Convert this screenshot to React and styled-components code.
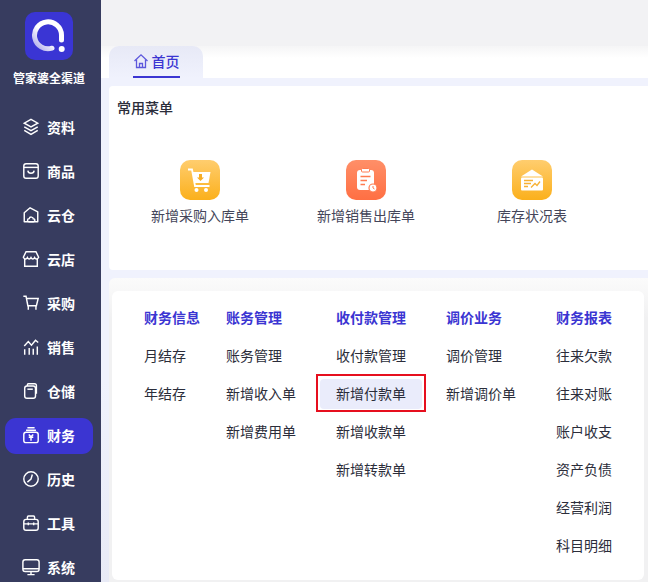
import React from 'react'
import styled, {createGlobalStyle} from 'styled-components'

const Global = createGlobalStyle`
    html, body {
        margin:0;
        padding:0;
        height:100%;
        overflow:hidden;
        background:#f0f2fd;
    }
    body {
        font-family:"Noto Sans CJK SC", "Liberation Sans", sans-serif;
    }
`

const Page = styled.div`
    display:flex;
    width:648px;
    height:582px;
    overflow:hidden;
`

const Sidebar = styled.aside`
    flex:none;
    box-sizing:border-box;
    width:101px;
    height:582px;
    padding-right:3px;
    background:#373c5f;
    display:flex;
    flex-direction:column;
    align-items:center;
    overflow:hidden;
`

const Logo = styled.div`
    flex:none;
    width:48px;
    height:48px;
    margin-top:12px;
    border-radius:10px;
    background:#3a35d4;
    display:flex;
    align-items:center;
    justify-content:center;
`

const Brand = styled.div`
    flex:none;
    margin-top:8px;
    height:20px;
    line-height:20px;
    font-size:12px;
    font-weight:700;
    color:#fff;
    white-space:nowrap;
`

const Nav = styled.nav`
    flex:none;
    margin-top:22px;
    width:100%;
    display:flex;
    flex-direction:column;
    gap:8px;
`

const NavItem = styled.div`
    box-sizing:border-box;
    width:88px;
    height:36px;
    margin-left:5px;
    padding:0 0 2px 17px;
    border-radius:11px;
    display:flex;
    align-items:center;
    gap:7px;
    background:${p => p.$active ? '#3b35d2' : 'transparent'};
    color:#fff;
    font-size:14px;
    font-weight:700;
    svg {
        flex:none;
    }
`

const Main = styled.main`
    flex:1;
    min-width:0;
    display:flex;
    flex-direction:column;
`

const Header = styled.div`
    flex:none;
    height:46px;
    background:#f2f2f4;
`

const TabBar = styled.div`
    flex:none;
    height:32px;
    padding-left:8px;
    background:linear-gradient(#f5f5f6, #fff 12px);
`

const Tab = styled.div`
    width:94px;
    height:32px;
    border-radius:10px 10px 0 0;
    background:linear-gradient(#e7e9f6, #f0f2fd);
    display:flex;
    justify-content:center;
`

const TabInner = styled.div`
    height:32px;
    box-sizing:border-box;
    border-bottom:2px solid #3b35d2;
    display:flex;
    align-items:center;
    gap:3px;
    color:#3b35d2;
    font-size:14px;
    font-weight:500;
`

const Content = styled.div`
    flex:1;
    min-height:0;
    display:flex;
    flex-direction:column;
    padding:8px 0 0 8px;
    background:linear-gradient(#f0f2fd 60%, #e8eaf6);
`

const QuickCard = styled.section`
    flex:none;
    height:184px;
    box-sizing:border-box;
    background:#fff;
    border-radius:4px 0 0 4px;
    padding:11px 8px 0;
`

const CardTitle = styled.div`
    height:20px;
    line-height:20px;
    font-size:14px;
    font-weight:500;
    color:#2b2d3a;
`

const Shortcuts = styled.div`
    display:flex;
    margin-top:43px;
    padding-left:17px;
    gap:34px;
`

const Shortcut = styled.div`
    width:132px;
    display:flex;
    flex-direction:column;
    align-items:center;
    gap:5px;
    font-size:14px;
    line-height:20px;
    color:#44465a;
`

const ShortcutIcon = styled.div`
    width:40px;
    height:40px;
    border-radius:10px;
    background:${p => p.$tone === 'orange'
        ? 'linear-gradient(#ff8f68, #ff6f43)'
        : 'linear-gradient(#ffcd6e, #fbb01c)'};
    display:flex;
    align-items:center;
    justify-content:center;
`

const MenuPanel = styled.div`
    flex:1;
    min-height:0;
    margin-top:8px;
    padding:13px 4px 2px 3px;
    border-radius:6px 0 0 0;
    background:linear-gradient(#fbfbfb, #f1f1f2 40px);
    display:flex;
`

const MenuCard = styled.section`
    flex:1;
    box-sizing:border-box;
    background:#fff;
    border-radius:6px;
    padding:7px 0 0 32px;
    display:flex;
    overflow:hidden;
`

const Column = styled.div`
    flex:none;
    width:${p => p.$width}px;
    display:flex;
    flex-direction:column;
`

const ColumnTitle = styled.div`
    height:38px;
    line-height:38px;
    font-size:14px;
    font-weight:700;
    color:#3b35d2;
    white-space:nowrap;
`

const MenuLink = styled.div`
    height:38px;
    line-height:38px;
    font-size:14px;
    color:#2b2d3a;
    white-space:nowrap;
`

const HighlightLink = styled(MenuLink)`
    position:relative;
    &::before {
        content:"";
        position:absolute;
        left:-20px;
        top:0;
        width:110px;
        height:38px;
        box-sizing:border-box;
        border:2px solid #e60f1e;
        background:#fff;
    }
    &::after {
        content:"";
        position:absolute;
        left:-16px;
        top:5px;
        width:102px;
        height:30px;
        border-radius:4px;
        background:#eaecfb;
    }
    span {
        position:relative;
        z-index:1;
    }
`

const navItems = [
    {label:'资料', icon:'layers'},
    {label:'商品', icon:'bag'},
    {label:'云仓', icon:'cloudHouse'},
    {label:'云店', icon:'store'},
    {label:'采购', icon:'cart'},
    {label:'销售', icon:'chart'},
    {label:'仓储', icon:'box'},
    {label:'财务', icon:'money', active:true},
    {label:'历史', icon:'clock'},
    {label:'工具', icon:'toolbox'},
    {label:'系统', icon:'monitor'},
]

const columns = [
    {title:'财务信息', width:82, links:['月结存', '年结存']},
    {title:'账务管理', width:110, links:['账务管理', '新增收入单', '新增费用单']},
    {title:'收付款管理', width:110, links:['收付款管理', '新增付款单', '新增收款单', '新增转款单'], hot:'新增付款单'},
    {title:'调价业务', width:110, links:['调价管理', '新增调价单']},
    {title:'财务报表', width:70, links:['往来欠款', '往来对账', '账户收支', '资产负债', '经营利润', '科目明细']},
]

const navPaths = {
    layers:<>
        <path d="M10 1.500 17.500 5.800 10 10 2.500 5.800Z"/>
        <path d="M2.500 9.800 10 14 17.500 9.800"/>
        <path d="M2.500 13.800 10 18.200 17.500 13.800"/>
    </>,
    bag:<>
        <rect x="2" y="2" width="16" height="16" rx="2.500"/>
        <path d="M2 6H18"/>
        <path d="M6.500 9.500C7 13.500 13 13.500 13.500 9.500"/>
    </>,
    cloudHouse:<>
        <path d="M2.500 17.500V7.500L9 2 17.500 6.500V17.500Z" strokeLinejoin="round"/>
        <path d="M8 17.500c-2.500 0-2.500-3.500 0-3.500 .5-2.500 4.500-2 4.500 .2 2.500 0 2.300 3.300 0 3.300Z"/>
    </>,
    store:<>
        <path d="M4.500 2H15.500L18.500 8C17.500 10.500 15 10.500 14 8.500 13 10.500 11 10.500 10 8.500 9 10.500 7 10.500 6 8.500 5 10.500 2.500 10.500 1.500 8Z"/>
        <path d="M3 10V18H17V10"/>
    </>,
    cart:<>
        <path d="M1.500 2.500H4.500L6.500 13H16L18 5H5"/>
        <path d="M7 13V17.500M15.500 13V17.500"/>
    </>,
    chart:<>
        <path d="M2.500 9 7 4 10.500 8 15 2.500 18 5"/>
        <path d="M3 12.500V18.500M8 11V18.500M12.500 12V18.500M17 9.500V18.500"/>
    </>,
    box:<>
        <path d="M6 4.500V3C6 2.500 6.500 2 7 2H14C15.500 2 16 2.500 16 4V13"/>
        <rect x="3" y="4.500" width="12" height="13.500" rx="2.500"/>
        <path d="M6 8H12"/>
    </>,
    money:<>
        <path d="M6 2H14M4.500 4.800H15.500"/>
        <rect x="2" y="7" width="16" height="11.500" rx="2.500"/>
        <path d="M7.500 9.500 10 12 12.500 9.500M7.500 12.500H12.500M10 12V16.500"/>
    </>,
    clock:<>
        <circle cx="10" cy="10" r="8"/>
        <path d="M11.500 5 10 10 6 13.500"/>
    </>,
    toolbox:<>
        <path d="M6 6V3.500C6 2.800 6.500 2.300 7.200 2.300H12.800C13.500 2.300 14 2.800 14 3.500V6"/>
        <rect x="2" y="6" width="16" height="12" rx="2.500"/>
        <path d="M2 11H18M7 9.500V12.500M13 9.500V12.500"/>
    </>,
    monitor:<>
        <rect x="1" y="2" width="18" height="13" rx="2.500"/>
        <path d="M1 12H19M10 15V18M6 18.500H14"/>
    </>,
}

const NavIcon = ({name}) => (
    <svg width="18" height="18" viewBox="0 0 20 20" fill="none" stroke="#fff" strokeWidth="1.600">
        {navPaths[name]}
    </svg>
)

const LogoMark = () => (
    <svg width="36" height="36" viewBox="0 0 36 36" fill="none">
        <defs>
            <linearGradient id="ring" x1="0" y1="1" x2="1" y2="0">
                <stop offset="0" stopColor="#a9a6ea"/>
                <stop offset="0.45" stopColor="#fff"/>
            </linearGradient>
        </defs>
        <path d="M21 30.200A13.500 13.500 0 1 1 30.500 17V22" stroke="url(#ring)" strokeWidth="5" strokeLinecap="round"/>
        <circle cx="30.700" cy="31" r="3" fill="#fff"/>
    </svg>
)

const HomeIcon = () => (
    <svg width="16" height="16" viewBox="0 0 16 16" fill="none" stroke="#5d58dc" strokeWidth="1.300">
        <path d="M1.500 8 8 1.800 14.500 8"/>
        <path d="M3.500 6.500V14.500H12.500V6.500"/>
        <path d="M6.500 14.500V10.500H9.500V14.500"/>
    </svg>
)

const CartBadge = () => (
    <svg width="28" height="28" viewBox="0 0 28 28" fill="none">
        <path d="M2 3.500H6L9 20H23.500" stroke="#fff" strokeWidth="1.800"/>
        <path d="M6.500 6H24.500L22.500 17H8.500Z" fill="#fff"/>
        <path d="M13 8H16V11.500H18L14.500 15 11 11.500H13Z" fill="#f7ad25"/>
        <circle cx="10.500" cy="24" r="2" fill="#fff"/>
        <circle cx="20" cy="24" r="2" fill="#fff"/>
    </svg>
)

const ClipBadge = () => (
    <svg width="28" height="28" viewBox="0 0 28 28">
        <rect x="5" y="4" width="17" height="20" rx="3" fill="#fff"/>
        <rect x="9.500" y="2.500" width="8" height="3.500" rx="1" fill="#fff" stroke="#ff7b50"/>
        <path d="M8.500 10.500H18.500M8.500 14.500H15M8.500 18.500H13" stroke="#ff7b50" strokeWidth="1.500"/>
        <circle cx="21" cy="22" r="4" fill="#fff" stroke="#ff7b50" strokeWidth="1.200"/>
        <path d="M21 20V22L22.500 23" stroke="#ff7b50" fill="none"/>
    </svg>
)

const MailBadge = () => (
    <svg width="28" height="28" viewBox="0 0 28 28">
        <path d="M3 10.500 14 3.500 25 10.500Z" fill="#fff"/>
        <rect x="3" y="11.500" width="22" height="13" rx="1" fill="#fff"/>
        <path d="M6 14.500H15M6 17.500H13M6 20.500H10" stroke="#f7b133" strokeWidth="1.300"/>
        <path d="M13 21.500 17 17.500 19 19.500 22 15.500" stroke="#f7b133" strokeWidth="1.300" fill="none"/>
    </svg>
)

const App = () => {
    return (
        <Page>
            <Global/>
            <Sidebar>
                <Logo><LogoMark/></Logo>
                <Brand>管家婆全渠道</Brand>
                <Nav>
                    {navItems.map(item => (
                        <NavItem key={item.label} $active={item.active}>
                            <NavIcon name={item.icon}/>
                            {item.label}
                        </NavItem>
                    ))}
                </Nav>
            </Sidebar>
            <Main>
                <Header/>
                <TabBar>
                    <Tab>
                        <TabInner><HomeIcon/>首页</TabInner>
                    </Tab>
                </TabBar>
                <Content>
                    <QuickCard>
                        <CardTitle>常用菜单</CardTitle>
                        <Shortcuts>
                            <Shortcut>
                                <ShortcutIcon><CartBadge/></ShortcutIcon>
                                新增采购入库单
                            </Shortcut>
                            <Shortcut>
                                <ShortcutIcon $tone="orange"><ClipBadge/></ShortcutIcon>
                                新增销售出库单
                            </Shortcut>
                            <Shortcut>
                                <ShortcutIcon><MailBadge/></ShortcutIcon>
                                库存状况表
                            </Shortcut>
                        </Shortcuts>
                    </QuickCard>
                    <MenuPanel>
                        <MenuCard>
                            {columns.map(col => (
                                <Column key={col.title} $width={col.width}>
                                    <ColumnTitle>{col.title}</ColumnTitle>
                                    {col.links.map(link => link === col.hot
                                        ? <HighlightLink key={link}><span>{link}</span></HighlightLink>
                                        : <MenuLink key={link}>{link}</MenuLink>)}
                                </Column>
                            ))}
                        </MenuCard>
                    </MenuPanel>
                </Content>
            </Main>
        </Page>
    )
}

export default App;
